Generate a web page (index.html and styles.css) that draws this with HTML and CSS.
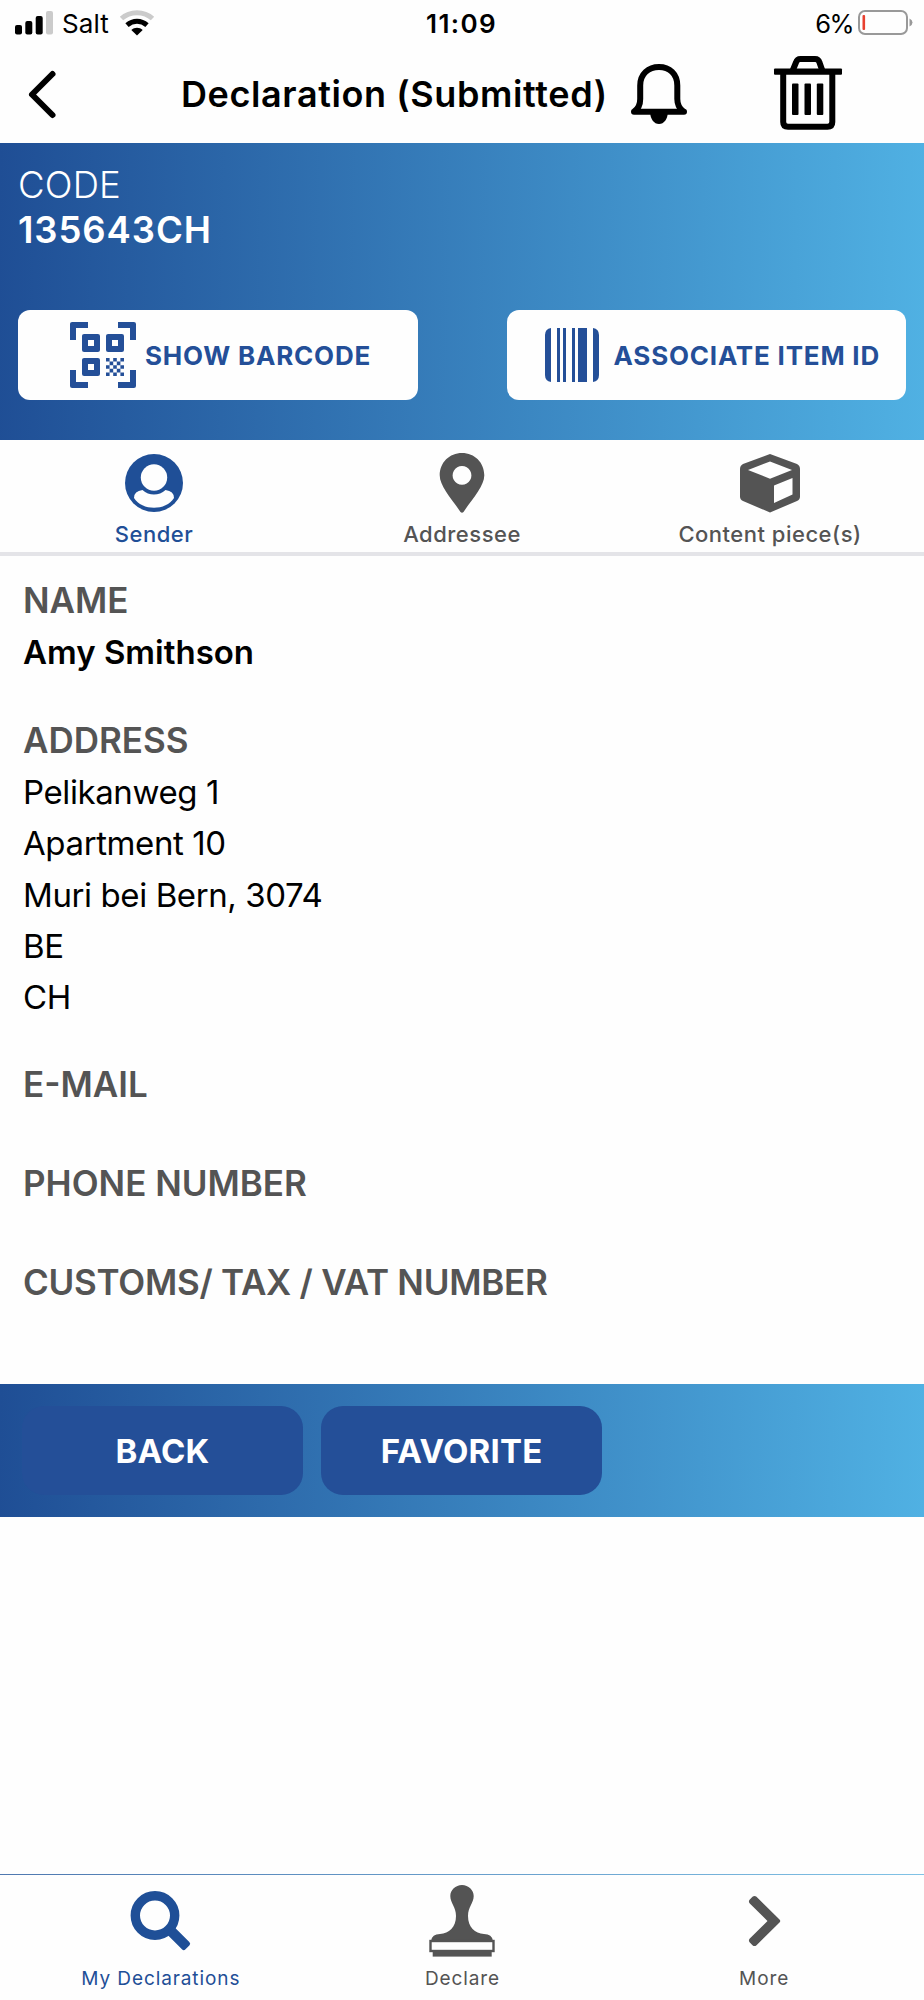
FILE: index.html
```
<!DOCTYPE html>
<html lang="en">
<head>
    <meta charset="UTF-8">
    <meta name="viewport" content="width=device-width, initial-scale=1.0">
    <title>Declaration (Submitted)</title>
    <link rel="stylesheet" href="styles.css">
</head>
<body>
    <div class="status-bar">
        <svg class="signal" width="40" height="26" viewBox="0 0 40 26">
            <rect x="0" y="15" width="7" height="9.5" rx="2"/>
            <rect x="10.3" y="11" width="7" height="13.5" rx="2"/>
            <rect x="20.7" y="6" width="7" height="18.5" rx="2"/>
            <rect x="31" y="1" width="7" height="23.5" rx="2" fill="#cbcbcb"/>
        </svg>
        <span class="carrier">Salt</span>
        <svg class="wifi" width="36" height="26" viewBox="0 0 36 26">
            <path d="M2.5 8.5C11 .7 25 .7 33.5 8.5" fill="none" stroke="#cbcbcb" stroke-width="5"/>
            <path d="M8 15.2C14 10 22 10 28 15.2" fill="none" stroke="#000" stroke-width="5"/>
            <path d="M12.3 20C15.6 17 20.4 17 23.7 20L18 25.4z"/>
        </svg>
        <span class="time">11:09</span>
        <span class="percent">6%</span>
        <svg class="battery" width="56" height="26" viewBox="0 0 56 26">
            <rect x="1" y="1" width="48" height="23" rx="6" fill="none" stroke="#999" stroke-width="2"/>
            <rect x="4.5" y="5" width="2.6" height="15" rx="1" fill="#e8402f"/>
            <path d="M51.5 8.5q3 1.5 3 4t-3 4z" fill="#999"/>
        </svg>
    </div>
    <div class="header">
        <svg class="back-arrow" width="30" height="50" viewBox="0 0 30 50">
            <path d="M24.5 4L4 24.5 24.5 45" fill="none" stroke="#000" stroke-width="6" stroke-linecap="round" stroke-linejoin="round"/>
        </svg>
        <h1 class="title">Declaration (Submitted)</h1>
        <svg class="bell" width="56" height="62" viewBox="0 0 56 62">
            <path d="M3 48.7H53M3.5 48.2C8 45 9.2 41 9.2 36V22.5C9.2 11 17.5 4 28 4S46.3 11 46.3 22.5V36C46.3 41 48 45 52 48.2" fill="none" stroke="#000" stroke-width="6" stroke-linecap="round" stroke-linejoin="round"/>
            <path d="M19.3 50H36.7C36.7 56 33 61 28 61S19.3 56 19.3 50z"/>
        </svg>
        <svg class="trash" width="68" height="74" viewBox="0 0 68 74">
            <g fill="none" stroke="#000" stroke-width="6">
                <path d="M9.2 16V66Q9.2 70.8 14 70.8H53.5Q58.3 70.8 58.3 66V16"/>
                <path d="M18.5 15L22 6.5Q23 3 26.5 3H41Q44.5 3 45.5 6.5L48.5 15"/>
            </g>
            <rect x="0" y="12.5" width="68" height="6.2" rx="1"/>
            <rect x="18" y="27.5" width="6.5" height="31.5" rx="1"/>
            <rect x="30.5" y="27.5" width="6.5" height="31.5" rx="1"/>
            <rect x="42.8" y="27.5" width="6.5" height="31.5" rx="1"/>
        </svg>
    </div>

    <div class="banner">
        <div class="code-label">CODE</div>
        <div class="code-value">135643CH</div>
        <div class="banner-buttons">
            <button class="white-button show">
                <svg width="66" height="66" viewBox="0 0 22 22" fill="#244f98">
                    <path d="M.7 0H6v2H2v4H0V.7Q0 0 .7 0zM16 0h5.3q.7 0 .7.7V6h-2V2h-4zM0 16h2v4h4v2H.7Q0 22 0 21.3zM20 16h2v5.3q0 .7-.7.7H16v-2h4z"/>
                    <path fill-rule="evenodd" d="M4.7 4h4.6q.7 0 .7.7v4.6q0 .7-.7.7H4.7Q4 10 4 9.3V4.7Q4 4 4.7 4zM6 6v2h2V6zM12.7 4h4.6q.7 0 .7.7v4.6q0 .7-.7.7h-4.6q-.7 0-.7-.7V4.7q0-.7.7-.7zM14 6v2h2V6zM4.7 12h4.6q.7 0 .7.7v4.6q0 .7-.7.7H4.7Q4 18 4 17.3v-4.6q0-.7.7-.7zM6 14v2h2v-2z"/>
                    <path d="M12 12h1.2v1.2H12zM14.4 12h1.2v1.2h-1.2zM16.8 12H18v1.2h-1.2zM13.2 13.2h1.2v1.2h-1.2zM15.6 13.2h1.2v1.2h-1.2zM12 14.4h1.2v1.2H12zM14.4 14.4h1.2v1.2h-1.2zM16.8 14.4H18v1.2h-1.2zM13.2 15.6h1.2v1.2h-1.2zM15.6 15.6h1.2v1.2h-1.2zM12 16.8h1.2V18H12zM14.4 16.8h1.2V18h-1.2zM16.8 16.8H18V18h-1.2z"/>
                </svg>
                <span>SHOW BARCODE</span>
            </button>
            <button class="white-button associate">
                <svg width="54" height="54" viewBox="0 0 54 54" fill="#244f98">
                    <path d="M6 0v54Q0 53 0 47V7Q0 1 6 0zM12 0h3v54h-3zM18 0h3v54h-3zM27 0h3v54h-3zM33 0h9v54h-9zM48 0q6 1 6 7v40q0 6-6 7z"/>
                </svg>
                <span>ASSOCIATE ITEM ID</span>
            </button>
        </div>
    </div>

    <div class="tabs">
        <div class="tab active">
            <svg width="60" height="60" viewBox="0 0 60 60">
                <circle cx="30" cy="30" r="29" fill="#1f4f97"/>
                <circle cx="30" cy="24.5" r="13.2" fill="#fefefe"/>
                <path d="M18.5 37Q10 38 10 45C18 58 42 58 50 45Q50 38 41.5 37C35 43 25 43 18.5 37z" fill="#fefefe"/>
            </svg>
            <span>Sender</span>
        </div>
        <div class="tab">
            <svg width="60" height="60" viewBox="0 0 60 60">
                <path fill="#545454" fill-rule="evenodd" d="M30 0C42.5 0 52.3 9.5 52.3 22.3C52.3 33 41 45 31.5 59Q30 60.5 28.5 59C19 45 7.7 33 7.7 22.3C7.7 9.5 17.5 0 30 0zM30 13a9.4 9.4 0 1 0 .01 0z"/>
            </svg>
            <span>Addressee</span>
        </div>
        <div class="tab">
            <svg width="60" height="60" viewBox="0 0 60 60">
                <path fill="#545454" fill-rule="evenodd" d="M30 1L57 11Q60 12.5 60 16V43.5Q60 46.5 57 48L30 59.5 3 48Q0 46.5 0 43.5V16Q0 12.5 3 11zM30 8.5L8 17 30 25.7 52 17zM34 32.5V50L52.5 41.5V25z"/>
            </svg>
            <span>Content piece(s)</span>
        </div>
    </div>

    <div class="details">
        <div class="field">
            <div class="label">NAME</div>
            <div class="value name">Amy Smithson</div>
        </div>
        <div class="field address">
            <div class="label">ADDRESS</div>
            <div class="value">Pelikanweg 1</div>
            <div class="value">Apartment 10</div>
            <div class="value">Muri bei Bern, 3074</div>
            <div class="value">BE</div>
            <div class="value">CH</div>
        </div>
        <div class="field empty">
            <div class="label">E-MAIL</div>
        </div>
        <div class="field empty">
            <div class="label">PHONE NUMBER</div>
        </div>
        <div class="field empty">
            <div class="label customs">CUSTOMS/ TAX / VAT NUMBER</div>
        </div>
    </div>

    <div class="actions">
        <button class="blue-button">BACK</button>
        <button class="blue-button">FAVORITE</button>
    </div>

    <div class="bottom-nav">
        <div class="nav-item active">
            <svg width="76" height="76" viewBox="0 0 76 76">
                <circle cx="32" cy="36.5" r="19.7" fill="none" stroke="#1f4f97" stroke-width="9.4"/>
                <rect x="-2" y="-5.2" width="24.5" height="10.4" rx="2.5" transform="translate(48.5 52.5) rotate(45)" fill="#1f4f97"/>
            </svg>
            <span>My Declarations</span>
        </div>
        <div class="nav-item">
            <svg width="76" height="76" viewBox="0 0 76 76">
                <path fill="#545454" d="M38 6C44.5 6 49.7 11 49.7 17C49.7 24 44 28 44 37C44 48 51 54.5 60 55Q68 55 69 62H7Q8 55 16 55C25 54.5 32 48 32 37C32 28 26.3 24 26.3 17C26.3 11 31.5 6 38 6z"/>
                <rect x="6.5" y="62" width="63" height="10" fill="#fefefe" stroke="#545454" stroke-width="2.4"/>
                <rect x="8.7" y="73" width="59" height="4.6" fill="#545454"/>
            </svg>
            <span>Declare</span>
        </div>
        <div class="nav-item">
            <svg width="76" height="76" viewBox="0 0 76 76">
                <path d="M26.5 17.8Q28.5 16 30.5 17.8L53.5 40.5Q55 42 53.5 43.5L30.5 66.2Q28.5 68 26.5 66.2L23.8 63.5Q22 61.5 23.8 59.5L41.5 42 23.8 24.5Q22 22.5 23.8 20.5z" fill="#545454"/>
            </svg>
            <span>More</span>
        </div>
    </div>
</body>
</html>
```
FILE: styles.css
```
* {
    box-sizing: border-box;
}
body {
    margin: 0;
    height: 2000px;
    display: flex;
    flex-direction: column;
    font-family: Inter, "Liberation Sans", sans-serif;
    background-color: #fefefe;
    color: #000;
}
svg {
    display: block;
    flex: none;
    overflow: visible;
}
button {
    border: none;
    font-family: inherit;
}
.status-bar {
    display: flex;
    align-items: flex-start;
    height: 47px;
    padding: 10px 10px 0 15px;
    font-size: 26px;
    line-height: 27px;
}
.carrier {
    margin-left: 7px;
    width: 47px;
    letter-spacing: 0.1px;
}
.wifi {
    margin-left: 10px;
}
.time {
    margin-left: 271px;
    width: 78px;
    font-weight: 600;
    letter-spacing: 1.4px;
}
.percent {
    margin-left: auto;
    margin-right: 5px;
    font-size: 25.5px;
    letter-spacing: -1.5px;
}
.header {
    display: flex;
    align-items: flex-start;
    height: 96px;
}
.back-arrow {
    margin: 23px 0 0 28px;
}
.title {
    margin: 25px 0 0 123px;
    width: 425px;
    font-size: 36px;
    line-height: 44px;
    font-weight: 600;
    letter-spacing: 0.6px;
    white-space: nowrap;
}
.bell {
    margin: 16px 0 0 25px;
}
.trash {
    margin: 9px 0 0 87px;
}
.banner {
    height: 297px;
    padding: 20px 18px 0;
    background: linear-gradient(91deg, #1f4e95, #50b1e3);
    color: #fff;
    font-size: 36.5px;
    line-height: 45px;
}
.code-label {
    font-weight: 300;
    letter-spacing: 0.2px;
}
.code-value {
    font-weight: 600;
    letter-spacing: 0.9px;
}
.banner-buttons {
    display: flex;
    justify-content: space-between;
    margin-top: 57px;
}
.white-button {
    display: flex;
    align-items: center;
    width: 399.5px;
    height: 90px;
    padding: 0;
    border-radius: 12px;
    background-color: #fefefe;
    color: #244f98;
    font-size: 26px;
    font-weight: 700;
    letter-spacing: 0.8px;
    white-space: nowrap;
}
.show {
    padding-left: 52px;
    gap: 9px;
}
.associate {
    padding-left: 38px;
    gap: 15px;
}
.tabs {
    display: grid;
    grid-template-columns: repeat(3, 1fr);
    height: 116px;
    border-bottom: 4px solid #e4e4e8;
}
.tab {
    display: flex;
    flex-direction: column;
    align-items: center;
    padding-top: 13px;
    color: #545454;
    font-size: 22px;
    font-weight: 500;
    letter-spacing: 0.5px;
    line-height: 28px;
}
.tab span {
    margin-top: 7px;
}
.tab.active,
.nav-item.active {
    color: #1f4f97;
}
.details {
    height: 828px;
    padding: 18px 23px 0;
}
.field {
    margin-bottom: 35px;
}
.address {
    margin-bottom: 34px;
}
.empty {
    margin-bottom: 47px;
}
.label {
    margin-bottom: 1.4px;
    color: #545454;
    font-size: 35px;
    line-height: 52px;
    font-weight: 600;
}
.customs {
    letter-spacing: -0.25px;
}
.value {
    font-size: 33px;
    line-height: 51.3px;
    letter-spacing: -0.4px;
}
.name {
    font-weight: 600;
    letter-spacing: 0;
}
.actions {
    display: flex;
    gap: 18px;
    height: 133px;
    padding: 22px;
    background: linear-gradient(91deg, #1f4e95, #50b1e3);
}
.blue-button {
    width: 281px;
    height: 89px;
    padding: 0;
    border-radius: 22px;
    background-color: #244f98;
    color: #fff;
    font-size: 33px;
    font-weight: 700;
    letter-spacing: 0.2px;
}
.bottom-nav {
    display: grid;
    grid-template-columns: repeat(3, 1fr);
    margin-top: auto;
    height: 126px;
    padding: 4px 9px 0 10px;
    border-top: 1px solid #4a86bd;
    border-image: linear-gradient(90deg, #4f78b0, #80c2e6) 1;
}
.nav-item {
    display: flex;
    flex-direction: column;
    align-items: center;
    color: #545454;
    font-size: 19px;
    letter-spacing: 0.9px;
    line-height: 24px;
}
.nav-item span {
    margin-top: 12px;
}
```
